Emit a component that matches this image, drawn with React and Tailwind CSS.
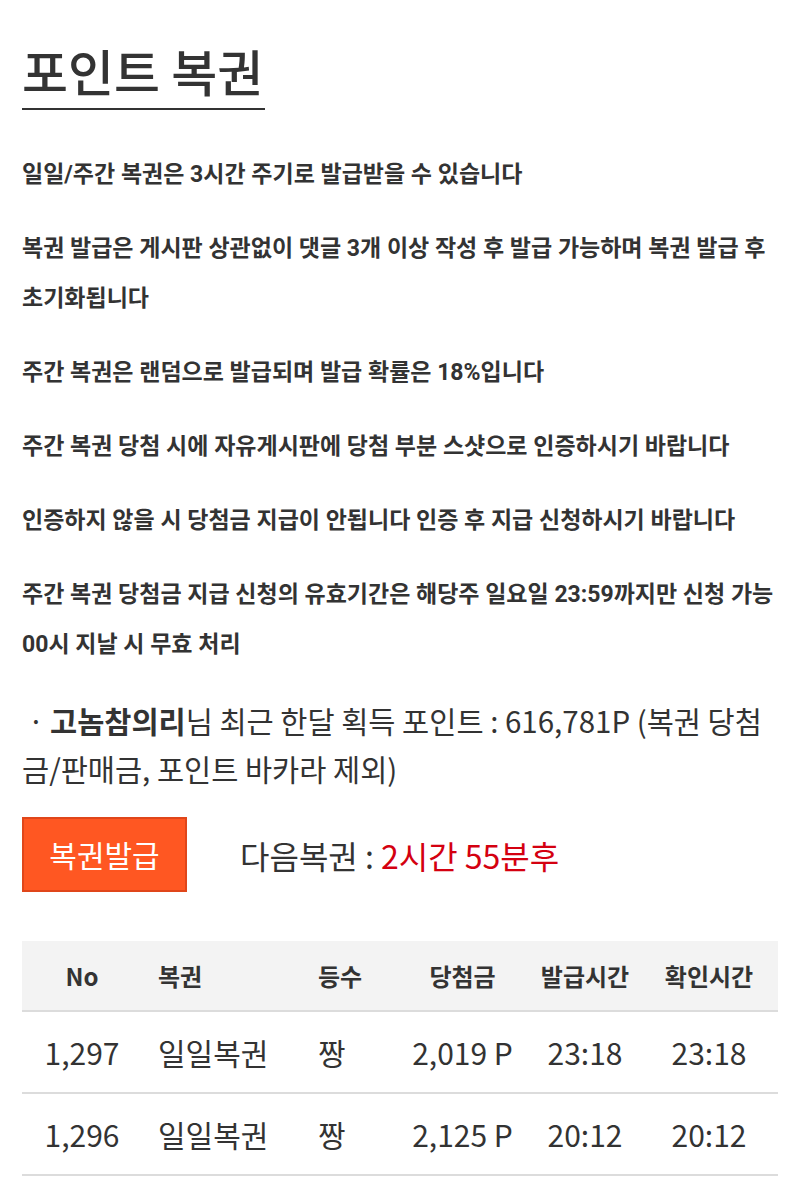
const NOTICES = [
  '일일/주간 복권은 3시간 주기로 발급받을 수 있습니다',
  '복권 발급은 게시판 상관없이 댓글 3개 이상 작성 후 발급 가능하며 복권 발급 후 초기화됩니다',
  '주간 복권은 랜덤으로 발급되며 발급 확률은 18%입니다',
  '주간 복권 당첨 시에 자유게시판에 당첨 부분 스샷으로 인증하시기 바랍니다',
  '인증하지 않을 시 당첨금 지급이 안됩니다 인증 후 지급 신청하시기 바랍니다',
  '주간 복권 당첨금 지급 신청의 유효기간은 해당주 일요일 23:59까지만 신청 가능 00시 지날 시 무효 처리',
]

const ROWS = [
  { no: '1,297', name: '일일복권', rank: '짱', prize: '2,019 P', issued: '23:18', checked: '23:18' },
  { no: '1,296', name: '일일복권', rank: '짱', prize: '2,125 P', issued: '20:12', checked: '20:12' },
]

const GRID = 'grid grid-cols-[120px_158px_95px_135px_110px_138px] items-center'

export default function App() {
  return (
    <div className="min-h-[1178px] bg-white px-[22px] pt-[40px] font-['Noto_Sans_CJK_KR',sans-serif] text-[#333]">
      {/* Title */}
      <h2 className="inline-block w-[243px] border-b-2 border-[#333] pb-[8px] text-[50px] font-medium leading-[60px]">
        포인트 복권
      </h2>

      {/* Notices */}
      <div className="mt-[40px] flex flex-col gap-[24px] font-['Roboto','Noto_Sans_CJK_KR',sans-serif]">
        {NOTICES.map((t) => (
          <p key={t} className="text-[23px] font-bold leading-[50px]">
            {t}
          </p>
        ))}
      </div>

      {/* Points info */}
      <p className="mt-[26px] text-[29.5px] leading-[48px]">
        <span className="inline-block w-[28px] text-center">·</span>
        <span className="font-bold">고놈참의리</span>님 최근 한달 획득 포인트 : 616,781P (복권 당첨
        <br />
        금/판매금, 포인트 바카라 제외)
      </p>

      {/* Issue button */}
      <div className="mt-[25px] flex items-center">
        <button className="h-[75px] w-[165px] border-2 border-[#e0461a] bg-[#ff5722] text-[30px] text-white">
          복권발급
        </button>
        <div className="ml-[53px] text-[32px]">
          다음복권 : <span className="text-[#d40010]">2시간 55분후</span>
        </div>
      </div>

      {/* Table */}
      <div className="mt-[49px]">
        <div className={`${GRID} h-[71px] border-b-2 border-[#dcdcdc] bg-[#f3f3f3] text-[24px] font-bold`}>
          <div className="text-center">No</div>
          <div className="pl-[16px]">복권</div>
          <div className="pl-[18px]">등수</div>
          <div className="text-center">당첨금</div>
          <div className="text-center">발급시간</div>
          <div className="text-center">확인시간</div>
        </div>
        {ROWS.map((r) => (
          <div key={r.no} className={`${GRID} h-[82px] border-b-2 border-[#dcdcdc] text-[30px]`}>
            <div className="text-center">{r.no}</div>
            <div className="pl-[16px]">{r.name}</div>
            <div className="pl-[18px]">{r.rank}</div>
            <div className="text-center">{r.prize}</div>
            <div className="text-center">{r.issued}</div>
            <div className="text-center">{r.checked}</div>
          </div>
        ))}
      </div>
    </div>
  )
}
